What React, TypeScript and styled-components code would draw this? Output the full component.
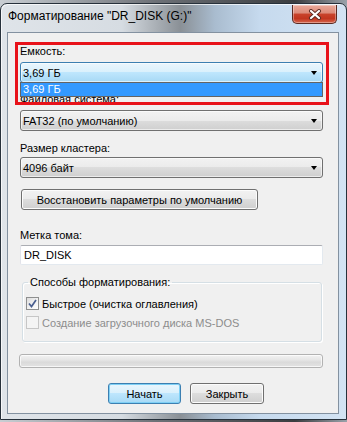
import React from "react";
import styled, { createGlobalStyle } from "styled-components";

const GlobalStyle = createGlobalStyle`
  html, body {
    margin: 0;
    padding: 0;
  }
  body {
    width: 347px;
    height: 422px;
    overflow: hidden;
    background: linear-gradient(90deg, #c9ced3 0%, #6d7177 45%, #3b3d40 85%, #9aa2aa 100%);
    font-family: "Liberation Sans", Arial, sans-serif;
  }
`;

const Window = styled.div`
  box-sizing: border-box;
  width: 347px;
  height: 417px;
  margin-top: 3px;
  display: flex;
  flex-direction: column;
  border: 1px solid #27313b;
  border-radius: 7px 7px 0 0;
  padding: 0 7px 5px 6px;
  background: linear-gradient(
    90deg,
    #dfe4e9 0%,
    #d6dce2 35%,
    #8a9096 52%,
    #a9bccf 62%,
    #c6daee 75%,
    #d3e3f3 100%
  );
  box-shadow: inset 1px 1px 0 rgba(255, 255, 255, 0.7);
`;

const TitleBar = styled.div`
  height: 28px;
  display: flex;
  justify-content: space-between;
  align-items: flex-start;
`;

const Title = styled.div`
  padding: 5px 0 0 1px;
  font-size: 12px;
  line-height: 15px;
  color: #000;
`;

const CloseButton = styled.button`
  width: 45px;
  height: 19px;
  margin: 1px 2px 0 0;
  padding: 0;
  border: 1px solid #5b2a22;
  border-top: none;
  border-radius: 0 0 5px 5px;
  background: linear-gradient(
    180deg,
    #e9a99a 0%,
    #dc8a78 45%,
    #c8432b 50%,
    #c2361f 75%,
    #d5664e 100%
  );
  box-shadow: inset 0 0 0 1px rgba(255, 255, 255, 0.35);
  display: flex;
  align-items: center;
  justify-content: center;
`;

const Client = styled.div`
  position: relative;
  flex: 1;
  border: 1px solid #8391a0;
  background: #f0f0f0;
  padding: 11px 15px 0 12px;
  display: flex;
  flex-direction: column;
  font-size: 11px;
`;

const Label = styled.div<{ $top?: number }>`
  margin-top: ${(p) => p.$top ?? 0}px;
  line-height: 15px;
  color: #000;
`;

const ComboWrap = styled.div<{ $top?: number }>`
  position: relative;
  margin-top: ${(p) => p.$top ?? 0}px;
`;

const Combo = styled.div<{ $focused?: boolean }>`
  box-sizing: border-box;
  height: 21px;
  display: flex;
  align-items: center;
  justify-content: space-between;
  padding: 0 5px 0 2px;
  border: 1px solid ${(p) => (p.$focused ? "#3c7fb1" : "#707070")};
  border-radius: 3px;
  color: #000;
  background: ${(p) =>
    p.$focused
      ? "linear-gradient(180deg, #eaf6fd 0%, #d9f0fc 50%, #bee6fd 50%, #a7d9f5 100%)"
      : "linear-gradient(180deg, #f2f2f2 0%, #ebebeb 50%, #dddddd 50%, #cfcfcf 100%)"};
  box-shadow: inset 0 0 0 1px rgba(255, 255, 255, 0.6);
`;

const Arrow = styled.span`
  width: 0;
  height: 0;
  border-left: 3.5px solid transparent;
  border-right: 3.5px solid transparent;
  border-top: 4px solid #000;
`;

const DropList = styled.div`
  position: absolute;
  top: 20px;
  left: 0;
  right: 0;
  box-sizing: border-box;
  height: 15px;
  border: 1px solid #646464;
  background: #3399ff;
  color: #fff;
  line-height: 13px;
  padding-left: 2px;
`;

const Button = styled.button<{ $default?: boolean; $width: number }>`
  box-sizing: border-box;
  width: ${(p) => p.$width}px;
  height: 21px;
  padding: 0;
  font-family: "Liberation Sans", Arial, sans-serif;
  font-size: 11px;
  color: #000;
  border: 1px solid ${(p) => (p.$default ? "#3c7fb1" : "#707070")};
  border-radius: 3px;
  background: ${(p) =>
    p.$default
      ? "linear-gradient(180deg, #eaf6fd 0%, #d9f0fc 50%, #bee6fd 50%, #a7d9f5 100%)"
      : "linear-gradient(180deg, #f2f2f2 0%, #ebebeb 50%, #dddddd 50%, #cfcfcf 100%)"};
  box-shadow: ${(p) =>
    p.$default ? "inset 0 0 0 1px #7fd0f5" : "inset 0 0 0 1px #fcfcfc"};
`;

const RestoreRow = styled.div`
  margin: 11px 0 0 1px;
`;

const TextBox = styled.div`
  box-sizing: border-box;
  height: 20px;
  margin-top: 2px;
  padding-left: 3px;
  border: 1px solid;
  border-color: #abadb3 #e3e9ef #e3e9ef #e2e3ea;
  border-radius: 2px;
  background: #fff;
  line-height: 18px;
  color: #000;
`;

const Group = styled.fieldset`
  margin: 10px 1px 0 2px;
  padding: 6px 4px 11px 3px;
  min-width: 0;
  border: 1px solid #d5dfe5;
  border-radius: 3px;
  box-shadow: inset 1px 1px 0 #fff, 1px 1px 0 #fff;
  display: flex;
  flex-direction: column;
  gap: 4px;
`;

const Legend = styled.legend`
  margin-left: 2px;
  padding: 0 2px;
  line-height: 15px;
  color: #000;
`;

const CheckRow = styled.div<{ $disabled?: boolean }>`
  display: flex;
  align-items: center;
  gap: 3px;
  height: 15px;
  color: ${(p) => (p.$disabled ? "#8d8d8d" : "#000")};
`;

const Box = styled.span<{ $disabled?: boolean }>`
  box-sizing: border-box;
  width: 13px;
  height: 13px;
  display: flex;
  align-items: center;
  justify-content: center;
  border: 1px solid ${(p) => (p.$disabled ? "#c6c6c6" : "#8e8f8f")};
  background: ${(p) =>
    p.$disabled
      ? "#f4f4f4"
      : "linear-gradient(135deg, #dcdcdc 0%, #f0f0f0 50%, #ffffff 100%)"};
`;

const Progress = styled.div`
  box-sizing: border-box;
  height: 14px;
  margin: 12px 0 0 -1px;
  border: 1px solid #b2b2b2;
  border-radius: 3px;
  background: linear-gradient(180deg, #f3f3f3 0%, #e6e6e6 40%, #dadada 60%, #e3e3e3 100%);
  box-shadow: inset 0 0 0 1px rgba(255, 255, 255, 0.7);
`;

const Actions = styled.div`
  display: flex;
  gap: 9px;
  margin-top: 15px;
  padding-left: 88px;
`;

const RedFrame = styled.div`
  position: absolute;
  left: 7px;
  top: 9px;
  width: 314px;
  height: 63px;
  box-sizing: border-box;
  border: 3px solid #e8121a;
  pointer-events: none;
`;

const CloseIcon = () => (
  <svg width="14" height="11" viewBox="0 0 14 11">
    <path d="M3 2 L11 9 M11 2 L3 9" stroke="#5a2a22" strokeWidth="4" strokeLinecap="round" />
    <path d="M3 2 L11 9 M11 2 L3 9" stroke="#fff" strokeWidth="2.2" strokeLinecap="round" />
  </svg>
);

const CheckMark = () => (
  <svg width="9" height="9" viewBox="0 0 9 9">
    <path d="M1 4.5 L3.5 7.5 L8 1" fill="none" stroke="#4a5f8f" strokeWidth="1.7" />
  </svg>
);

export default function App() {
  return (
    <>
      <GlobalStyle />
      <Window>
        <TitleBar>
          <Title>Форматирование "DR_DISK (G:)"</Title>
          <CloseButton>
            <CloseIcon />
          </CloseButton>
        </TitleBar>
        <Client>
          <Label>Емкость:</Label>
          <ComboWrap $top={3}>
            <Combo $focused>
              <span>3,69 ГБ</span>
              <Arrow />
            </Combo>
            <DropList>3,69 ГБ</DropList>
          </ComboWrap>

          <Label $top={9}>Файловая система:</Label>
          <ComboWrap $top={3}>
            <Combo>
              <span>FAT32 (по умолчанию)</span>
              <Arrow />
            </Combo>
          </ComboWrap>

          <Label $top={10}>Размер кластера:</Label>
          <ComboWrap $top={1}>
            <Combo>
              <span>4096 байт</span>
              <Arrow />
            </Combo>
          </ComboWrap>

          <RestoreRow>
            <Button $width={237}>Восстановить параметры по умолчанию</Button>
          </RestoreRow>

          <Label $top={18}>Метка тома:</Label>
          <TextBox>DR_DISK</TextBox>

          <Group>
            <Legend>Способы форматирования:</Legend>
            <CheckRow>
              <Box>
                <CheckMark />
              </Box>
              Быстрое (очистка оглавления)
            </CheckRow>
            <CheckRow $disabled>
              <Box $disabled />
              Создание загрузочного диска MS-DOS
            </CheckRow>
          </Group>

          <Progress />

          <Actions>
            <Button $default $width={73}>Начать</Button>
            <Button $width={74}>Закрыть</Button>
          </Actions>

          <RedFrame />
        </Client>
      </Window>
    </>
  );
}
